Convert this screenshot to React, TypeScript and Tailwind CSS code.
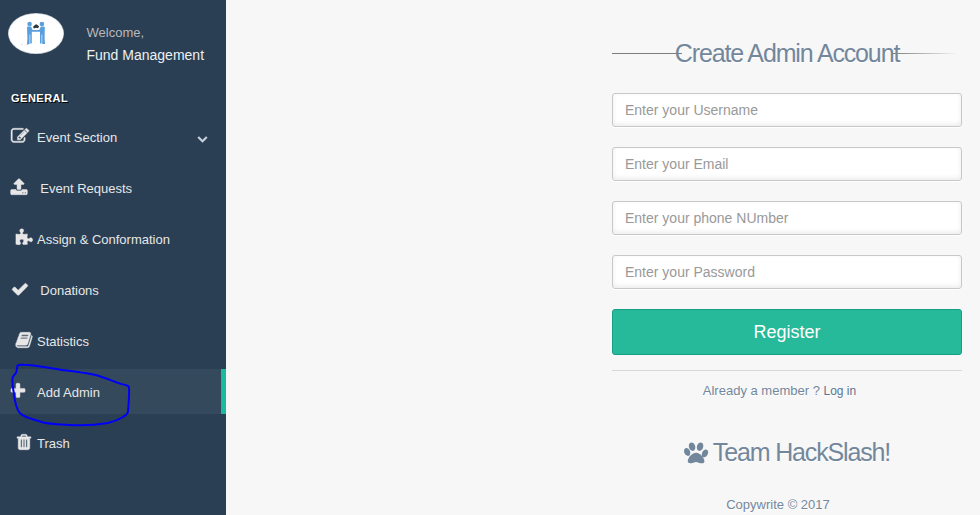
import type { ReactNode } from 'react';

const paths = {
  edit: 'M888 1184l116-116-152-152-116 116v56h96v96h56zm440-720q-16-16-33 1l-350 350q-17 17-1 33t33-1l350-350q17-17 1-33zm80 594v190q0 119-84.5 203.5t-203.5 84.5h-832q-119 0-203.5-84.5t-84.5-203.5v-832q0-119 84.5-203.5t203.5-84.5h832q63 0 117 25 15 7 18 23 3 17-9 29l-49 49q-14 14-32 8-23-6-45-6h-832q-66 0-113 47t-47 113v832q0 66 47 113t113 47h832q66 0 113-47t47-113v-126q0-13 9-22l64-64q15-15 35-7t20 29zm-96-738l288 288-672 672h-288v-288zm444 132l-92 92-288-288 92-92q28-28 68-28t68 28l152 152q28 28 28 68t-28 68z',
  upload: 'M1344 1472q0-26-19-45t-45-19-45 19-19 45 19 45 45 19 45-19 19-45zm256 0q0-26-19-45t-45-19-45 19-19 45 19 45 45 19 45-19 19-45zm128-224v320q0 40-28 68t-68 28h-1472q-40 0-68-28t-28-68v-320q0-40 28-68t68-28h427q21 56 70.5 92t110.5 36h256q61 0 110.5-36t70.5-92h427q40 0 68 28t28 68zm-325-648q-17 40-59 40h-256v448q0 26-19 45t-45 19h-256q-26 0-45-19t-19-45v-448h-256q-42 0-59-40-17-39 14-69l448-448q18-19 45-19t45 19l448 448q31 30 14 69z',
  puzzle: 'M1755 1083q0 81-44.5 135t-123.5 54q-41 0-77.5-17.5t-59-38-56.5-38-71-17.5q-110 0-110 124 0 39 16 115t15 115v5q-22 0-33 1-34 3-97.5 11.5t-115.5 13.5-98 5q-61 0-103-26.5t-42-83.5q0-37 17.5-71t38-56.5 38-59 17.5-77.5q0-79-54-123.5t-135-44.5q-84 0-143 45.5t-59 127.5q0 43 15 83t33.5 64.5 33.5 53 15 50.5q0 45-46 89-37 35-117 35-95 0-245-24-9-2-27.5-4t-27.5-4l-13-2q-1 0-3-1-2 0-2-1v-1024q2 1 17.5 3.5t34 5 21.5 3.5q150 24 245 24 80 0 117-35 46-44 46-89 0-22-15-50.5t-33.5-53-33.5-64.5-15-83q0-82 59-127.5t144-45.5q80 0 134 44.5t54 123.5q0 41-17.5 77.5t-38 59-38 56.5-17.5 71q0 57 42 83.5t103 26.5q64 0 180-15t163-17v2q-1 2-3.5 17.5t-5 34-3.5 21.5q-24 150-24 245 0 80 35 117 44 46 89 46 22 0 50.5-15t53-33.5 64.5-33.5 83-15q82 0 127.5 59t45.5 143z',
  check: 'M1671 566q0 40-28 68l-724 724-136 136q-28 28-68 28t-68-28l-136-136-362-362q-28-28-28-68t28-68l136-136q28-28 68-28t68 28l294 295 656-657q28-28 68-28t68 28l136 136q28 28 28 68z',
  book: 'M1703 478q40 57 18 129l-275 906q-19 64-76.5 107.5t-122.5 43.5h-923q-77 0-148.5-53.5t-99.5-131.5q-24-67-2-127 0-4 3-27t4-37q1-8-3-21.5t-3-19.5q2-11 8-21t16.5-23.5 16.5-23.5q23-38 45-91.5t30-91.5q3-10 .5-30t-.5-28q3-11 17-28t17-23q21-36 42-92t25-90q1-9-2.5-32t.5-28q4-13 22-30.5t22-22.5q19-26 42.5-84.5t27.5-96.5q1-8-3-25.5t-2-26.5q2-8 9-18t18-23 17-21q8-12 16.5-30.5t15-35 16-36 19.5-32 26.5-23.5 36-11.5 47.5 5.5l-1 3q38-9 51-9h761q74 0 114 56t18 130l-274 906q-36 119-71.5 153.5t-128.5 34.5h-869q-27 0-38 15-11 16-1 43 24 70 144 70h923q29 0 56-15.5t35-41.5l300-987q7-22 5-57 38 15 59 43zm-1064 2q-4 13 2 22.5t20 9.5h608q13 0 25.5-9.5t16.5-22.5l21-64q4-13-2-22.5t-20-9.5h-608q-13 0-25.5 9.5t-16.5 22.5zm-83 256q-4 13 2 22.5t20 9.5h608q13 0 25.5-9.5t16.5-22.5l21-64q4-13-2-22.5t-20-9.5h-608q-13 0-25.5 9.5t-16.5 22.5z',
  plus: 'M1600 736v192q0 40-28 68t-68 28h-416v416q0 40-28 68t-68 28h-192q-40 0-68-28t-28-68v-416h-416q-40 0-68-28t-28-68v-192q0-40 28-68t68-28h416v-416q0-40 28-68t68-28h192q40 0 68 28t28 68v416h416q40 0 68 28t28 68z',
  trash: 'M704 1376v-704q0-14-9-23t-23-9h-64q-14 0-23 9t-9 23v704q0 14 9 23t23 9h64q14 0 23-9t9-23zm256 0v-704q0-14-9-23t-23-9h-64q-14 0-23 9t-9 23v704q0 14 9 23t23 9h64q14 0 23-9t9-23zm256 0v-704q0-14-9-23t-23-9h-64q-14 0-23 9t-9 23v704q0 14 9 23t23 9h64q14 0 23-9t9-23zm-544-992h448l-48-117q-7-9-17-11h-317q-10 2-17 11zm928 32v64q0 14-9 23t-23 9h-96v948q0 83-47 143.5t-113 60.5h-832q-66 0-113-58.5t-47-141.5v-952h-96q-14 0-23-9t-9-23v-64q0-14 9-23t23-9h309l70-167q15-37 54-63t79-26h320q40 0 79 26t54 63l70 167h309q14 0 23 9t9 23z',
  chevron: 'M1683 808l-742 741q-19 19-45 19t-45-19l-742-741q-19-19-19-45.5t19-45.5l166-165q19-19 45-19t45 19l531 531 531-531q19-19 45-19t45 19l166 165q19 19 19 45.5t-19 45.5z',
  paw: 'M780 508q0 60-19 113.5t-63 92.5-105 39q-76 0-138-57.5t-92-135.5-30-151q0-60 19-113.5t63-92.5 105-39q77 0 138.5 57.5t91.5 135 30 151.5zm-342 390q0 80-42 139t-119 59q-76 0-141.5-55.5t-100.5-134-35-152.5q0-80 42-139.5t119-59.5q76 0 141.5 55.5t100.5 134.5 35 153zm394-27q118 0 255 97.5t229 237 92 254.5q0 46-17 76.5t-48.5 45-64.5 20-76 5.5q-68 0-187.5-45t-182.5-45q-66 0-192.500 44.500t-200.500 44.500q-183 0-183-146 0-86 56-191.500t139.500-192.500 187.500-146 193-59zm239-118q-61 0-105-39t-63-92.5-19-113.5q0-74 30-151.5t91.5-135 138.500-57.500q61 0 105 39t63 92.5 19 113.5q0 73-30 151t-92 135.5-138 57.5zm432-104q77 0 119 59.5t42 139.500q0 74-35 152.500t-100.500 134-141.500 55.500q-77 0-119-59t-42-139q0-74 35-153t100.500-134.500 141.500-55.500z',
};

type IconName = keyof typeof paths;

function Icon({ name, className }: { name: IconName; className: string }) {
  return (
    <svg viewBox="0 0 1792 1792" fill="currentColor" className={`shrink-0 overflow-visible ${className}`}>
      <path d={paths[name]} />
    </svg>
  );
}

interface Item {
  label: string;
  icon: IconName;
  pad: string;
  gap: string;
  active?: boolean;
  expandable?: boolean;
}

const items: Item[] = [
  { label: 'Event Section', icon: 'edit', pad: 'pl-[10.5px]', gap: 'ml-[8.5px]', expandable: true },
  { label: 'Event Requests', icon: 'upload', pad: 'pl-[10px]', gap: 'ml-[12.3px]' },
  { label: 'Assign & Conformation', icon: 'puzzle', pad: 'pl-[14.5px]', gap: 'ml-[4.5px]' },
  { label: 'Donations', icon: 'check', pad: 'pl-[11px]', gap: 'ml-[11.3px]' },
  { label: 'Statistics', icon: 'book', pad: 'pl-[15px]', gap: 'ml-[4px]' },
  { label: 'Add Admin', icon: 'plus', pad: 'pl-[9px]', gap: 'ml-[10px]', active: true },
  { label: 'Trash', icon: 'trash', pad: 'pl-[15px]', gap: 'ml-[4px]' },
];

function Avatar() {
  return (
    <svg viewBox="0 0 56 41" className="h-[41px] w-14 shrink-0">
      <ellipse cx="28" cy="20.5" rx="28" ry="20.5" fill="#c4ccd3" />
      <ellipse cx="28" cy="20.5" rx="27.3" ry="19.8" fill="#fff" />
      <g fill="#5a9fdd">
        <circle cx="21.6" cy="11" r="2.3" />
        <circle cx="33.9" cy="11" r="2.3" />
        <path d="M19 14.500q0-1 1-1h3l1.600 3.500h3.400v1.800h-4.200v11.700h-1.600v-9h-.6v9.500h-2.600l.4-6z" />
        <path d="M36.800 14.500q0-1-1-1h-3l-1.600 3.500h-3.400v1.800h4.200v11.700h1.600v-9h.6v9.500h2.800l-.4-6z" />
      </g>
      <path d="M24.800 14l2.200-2 1-.8 1.600.8 1.600 1.800-1.500 1.500-1.700-.5-1.700.7z" fill="#2f353b" />
      <path d="M13.500 31.500h1M18.500 31.500h2" stroke="#b9cde0" />
    </svg>
  );
}

function NavItem({ item }: { item: Item }) {
  return (
    <a className={`relative flex h-[45px] items-center ${item.pad} ${item.active ? 'border-r-[5px] border-[#1abb9c] bg-[#35495d]' : ''}`}>
      <Icon name={item.icon} className="mb-0.5 size-[18px] stroke-[#e7e7e7] [stroke-width:45px]" />
      <span className={`${item.gap} pt-[3px] whitespace-nowrap`}>{item.label}</span>
      {item.expandable && <Icon name="chevron" className="mt-[3px] mr-[18.5px] ml-auto size-[11px] text-[#c4cfda]" />}
      {item.active && (
        <svg className="absolute -top-[7px] left-[8px] h-[66px] w-[126px]" viewBox="8 362 126 66" fill="none">
          <path
            d="M17.500 365.500Q19 364.300 24 364.800C36 365 50 368.500 62 370C74 371.500 91 373.500 99 376C109 379 117 383.500 127 385.500Q129 386 129 388C129.500 395 128.500 404 128 412C126 417 115 421 108 423C96 425 80 425.500 70 425C60 424.500 49 424.500 40 421.500C30 418 23 417.500 19 412C15 406 14.500 398 13.500 391C12.500 385 12 378 13 376.500C15 373.500 16.500 374 16.500 371Z"
            stroke="#0000f8"
            strokeWidth="2"
            strokeLinejoin="round"
          />
        </svg>
      )}
    </a>
  );
}

function Sidebar() {
  return (
    <aside className="flex w-[226px] shrink-0 flex-col bg-[#2a3f54] text-[13px] leading-[18px] text-[#e7e7e7]">
      <div className="flex h-[89px] pt-[13px] pl-2">
        <Avatar />
        <div className="ml-[22.5px] pt-[11px]">
          <p className="text-[#bab8b8]">Welcome,</p>
          <h2 className="mt-1 text-[14px] whitespace-nowrap text-[#ecf0f1]">Fund Management</h2>
        </div>
      </div>
      <h3 className="h-[25px] pl-[11px] text-[11px] font-bold tracking-[0.5px] text-white [text-shadow:1px_1px_#000]">GENERAL</h3>
      <nav className="flex flex-col gap-1.5">
        {items.map((item) => (
          <NavItem key={item.label} item={item} />
        ))}
      </nav>
    </aside>
  );
}

function Title({ children }: { children: ReactNode }) {
  return <h1 className="text-[25px] leading-5 tracking-[-1.15px] whitespace-nowrap">{children}</h1>;
}

const fields = ['Enter your Username', 'Enter your Email', 'Enter your phone NUmber', 'Enter your Password'];

export default function App() {
  return (
    <div className="flex h-[515px] w-[980px] overflow-hidden bg-[#f7f7f7] font-['Liberation_Sans',Arial,sans-serif]">
      <Sidebar />
      <main className="ml-[386px] w-[350px] pt-[43px] text-[13px] text-[#73879c] [text-shadow:0_1px_0_#fff]">
        <div className="relative flex justify-center">
          <Title>Create Admin Account</Title>
          <span className="absolute top-[10px] left-0 h-px w-[70px] bg-[#7e7e7e]" />
          <span className="absolute top-[10px] right-0 h-px w-[70px] bg-linear-to-r from-[#7e7e7e] to-white" />
        </div>
        <form className="mt-[30px] flex flex-col gap-5">
          {fields.map((field) => (
            <input
              key={field}
              placeholder={field}
              className="h-[34px] rounded-[3px] border border-[#c8c8c8] bg-white px-3 text-[14px] shadow-[0_1px_0_#fff,inset_0_-2px_5px_rgba(0,0,0,0.08)] placeholder:text-[#999]"
            />
          ))}
          <button className="h-[46px] rounded-[3px] border border-[#169f85] bg-[#26b99a] text-[18px] text-white [text-shadow:none]">
            Register
          </button>
        </form>
        <div className="mt-[15px] flex flex-col items-center border-t border-[#d8d8d8]">
          <p className="mt-[11px] mr-[15px] leading-[18px] whitespace-nowrap">
            Already a member ? <a className="text-[12px] text-[#5a738e]">Log in</a>
          </p>
          <div className="mt-[42px] flex">
            <Icon name="paw" className="-mt-[2px] mr-[3px] size-[26px]" />
            <Title>Team HackSlash!</Title>
          </div>
          <p className="mt-[30px] mr-[18px] leading-[18px]">Copywrite © 2017</p>
        </div>
      </main>
    </div>
  );
}
